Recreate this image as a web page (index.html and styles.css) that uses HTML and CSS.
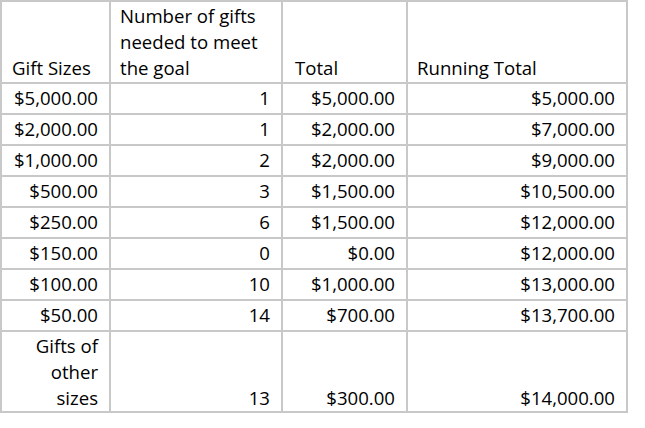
FILE: index.html
```html
<!DOCTYPE html>
<html lang="en">
<head>
<meta charset="utf-8">
<title>Gift Chart</title>
<link rel="stylesheet" href="styles.css">
</head>
<body>
<table class="sheet">
  <tr class="head">
    <td class="c1 txt">Gift Sizes</td>
    <td class="c2 txt">Number of gifts<br>needed to meet<br>the goal</td>
    <td class="c3 txt indent">Total</td>
    <td class="c4 txt">Running Total</td>
  </tr>
  <tr><td class="num">$5,000.00</td><td class="num">1</td><td class="num">$5,000.00</td><td class="num">$5,000.00</td></tr>
  <tr><td class="num">$2,000.00</td><td class="num">1</td><td class="num">$2,000.00</td><td class="num">$7,000.00</td></tr>
  <tr><td class="num">$1,000.00</td><td class="num">2</td><td class="num">$2,000.00</td><td class="num">$9,000.00</td></tr>
  <tr><td class="num">$500.00</td><td class="num">3</td><td class="num">$1,500.00</td><td class="num">$10,500.00</td></tr>
  <tr><td class="num">$250.00</td><td class="num">6</td><td class="num">$1,500.00</td><td class="num">$12,000.00</td></tr>
  <tr><td class="num">$150.00</td><td class="num">0</td><td class="num">$0.00</td><td class="num">$12,000.00</td></tr>
  <tr><td class="num">$100.00</td><td class="num">10</td><td class="num">$1,000.00</td><td class="num">$13,000.00</td></tr>
  <tr><td class="num">$50.00</td><td class="num">14</td><td class="num">$700.00</td><td class="num">$13,700.00</td></tr>
  <tr class="tall">
    <td class="txt right">Gifts of<br>other<br>sizes</td>
    <td class="num">13</td>
    <td class="num">$300.00</td>
    <td class="num">$14,000.00</td>
  </tr>
</table>
</body>
</html>
```

FILE: styles.css
```css
html, body {
  margin: 0;
  padding: 0;
  background: #ffffff;
}

.sheet {
  border-collapse: separate;
  border-spacing: 0;
  table-layout: fixed;
  width: 628px;
  border-top: 2px solid #c8c8c8;
  border-left: 2px solid #c8c8c8;
  font-family: "Open Sans", "Liberation Sans", sans-serif;
  font-size: 18.6px;
  color: #000000;
}

.sheet td {
  box-sizing: border-box;
  height: 31px;
  border-right: 2px solid #c8c8c8;
  border-bottom: 2px solid #c8c8c8;
  padding: 0 11px 2px 9px;
  vertical-align: bottom;
  line-height: 27px;
  white-space: nowrap;
  overflow: hidden;
}

.sheet .head td {
  height: 82px;
  line-height: 26px;
  padding-bottom: 1px;
}

.sheet .tall td {
  height: 81px;
  line-height: 26px;
  padding-bottom: 0;
}

.c1 { width: 109px; }
.c2 { width: 172px; }
.c3 { width: 125px; }
.c4 { width: 220px; }

.txt {
  text-align: left;
}

.sheet .c1.txt {
  padding-left: 10px;
}

.sheet .indent {
  padding-left: 12px;
}

.num {
  text-align: right;
}

.sheet .txt.right {
  text-align: right;
}
```
